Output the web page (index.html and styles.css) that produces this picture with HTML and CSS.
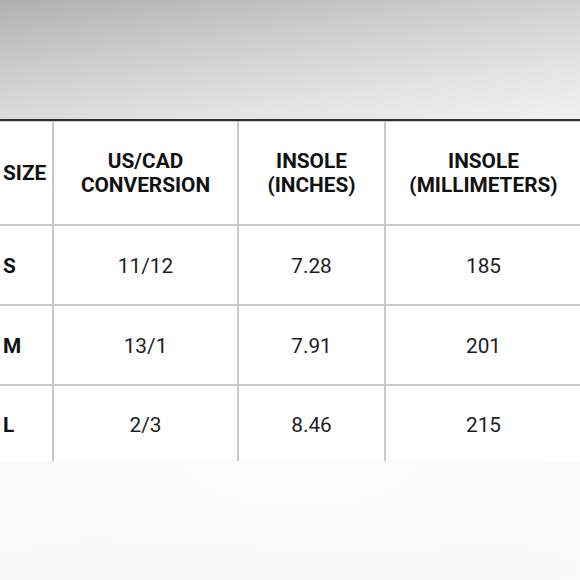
FILE: index.html
```html
<!DOCTYPE html>
<html>
<head>
<meta charset="utf-8">
<link rel="stylesheet" href="styles.css">
</head>
<body>
<div class="page">
  <div class="banner"></div>
  <div class="chart">
    <div class="cell head first">SIZE</div>
    <div class="cell head">US/CAD<br>CONVERSION</div>
    <div class="cell head">INSOLE<br>(INCHES)</div>
    <div class="cell head">INSOLE<br>(MILLIMETERS)</div>

    <div class="cell first bold">S</div>
    <div class="cell">11/12</div>
    <div class="cell">7.28</div>
    <div class="cell">185</div>

    <div class="cell first bold">M</div>
    <div class="cell">13/1</div>
    <div class="cell">7.91</div>
    <div class="cell">201</div>

    <div class="cell first bold">L</div>
    <div class="cell">2/3</div>
    <div class="cell">8.46</div>
    <div class="cell">215</div>
  </div>
  <div class="footer"></div>
</div>
</body>
</html>
```

FILE: styles.css
```css
html, body {
  margin: 0;
  padding: 0;
  background: #fafafa;
}
.page {
  width: 580px;
  height: 580px;
  overflow: hidden;
  display: flex;
  flex-direction: column;
  font-family: Roboto, "Liberation Sans", sans-serif;
}
.banner {
  height: 119px;
  flex: none;
  background: linear-gradient(172deg, #b0b0b0 0%, #cccccc 35%, #e2e2e2 70%, #f1f1f1 100%);
  border-bottom: 2px solid #303030;
}
.chart {
  flex: none;
  width: 581px;
  display: grid;
  grid-template-columns: 52px 183px 145px 195px;
  grid-template-rows: 102px 78px 78px 75px;
  gap: 2px;
  padding-top: 1px;
  background: #c9c9c9;
}
.cell {
  background: #ffffff;
  display: flex;
  align-items: center;
  justify-content: center;
  text-align: center;
  font-size: 20.8px;
  line-height: 24px;
  padding-top: 2px;
  color: #1e1e1e;
}
.head {
  font-weight: 700;
  color: #111111;
  padding-top: 0;
}
.first {
  justify-content: flex-start;
  text-align: left;
  padding-left: 3px;
}
.bold {
  font-weight: 700;
  color: #111111;
}
.footer {
  flex: 1;
  background:
    radial-gradient(ellipse 300px 120px at 300px 0px, #fdfdfd 0%, rgba(253,253,253,0) 100%),
    radial-gradient(ellipse 420px 60px at 280px 110px, #f6f6f6 0%, rgba(246,246,246,0) 100%),
    #fafafa;
}
```
